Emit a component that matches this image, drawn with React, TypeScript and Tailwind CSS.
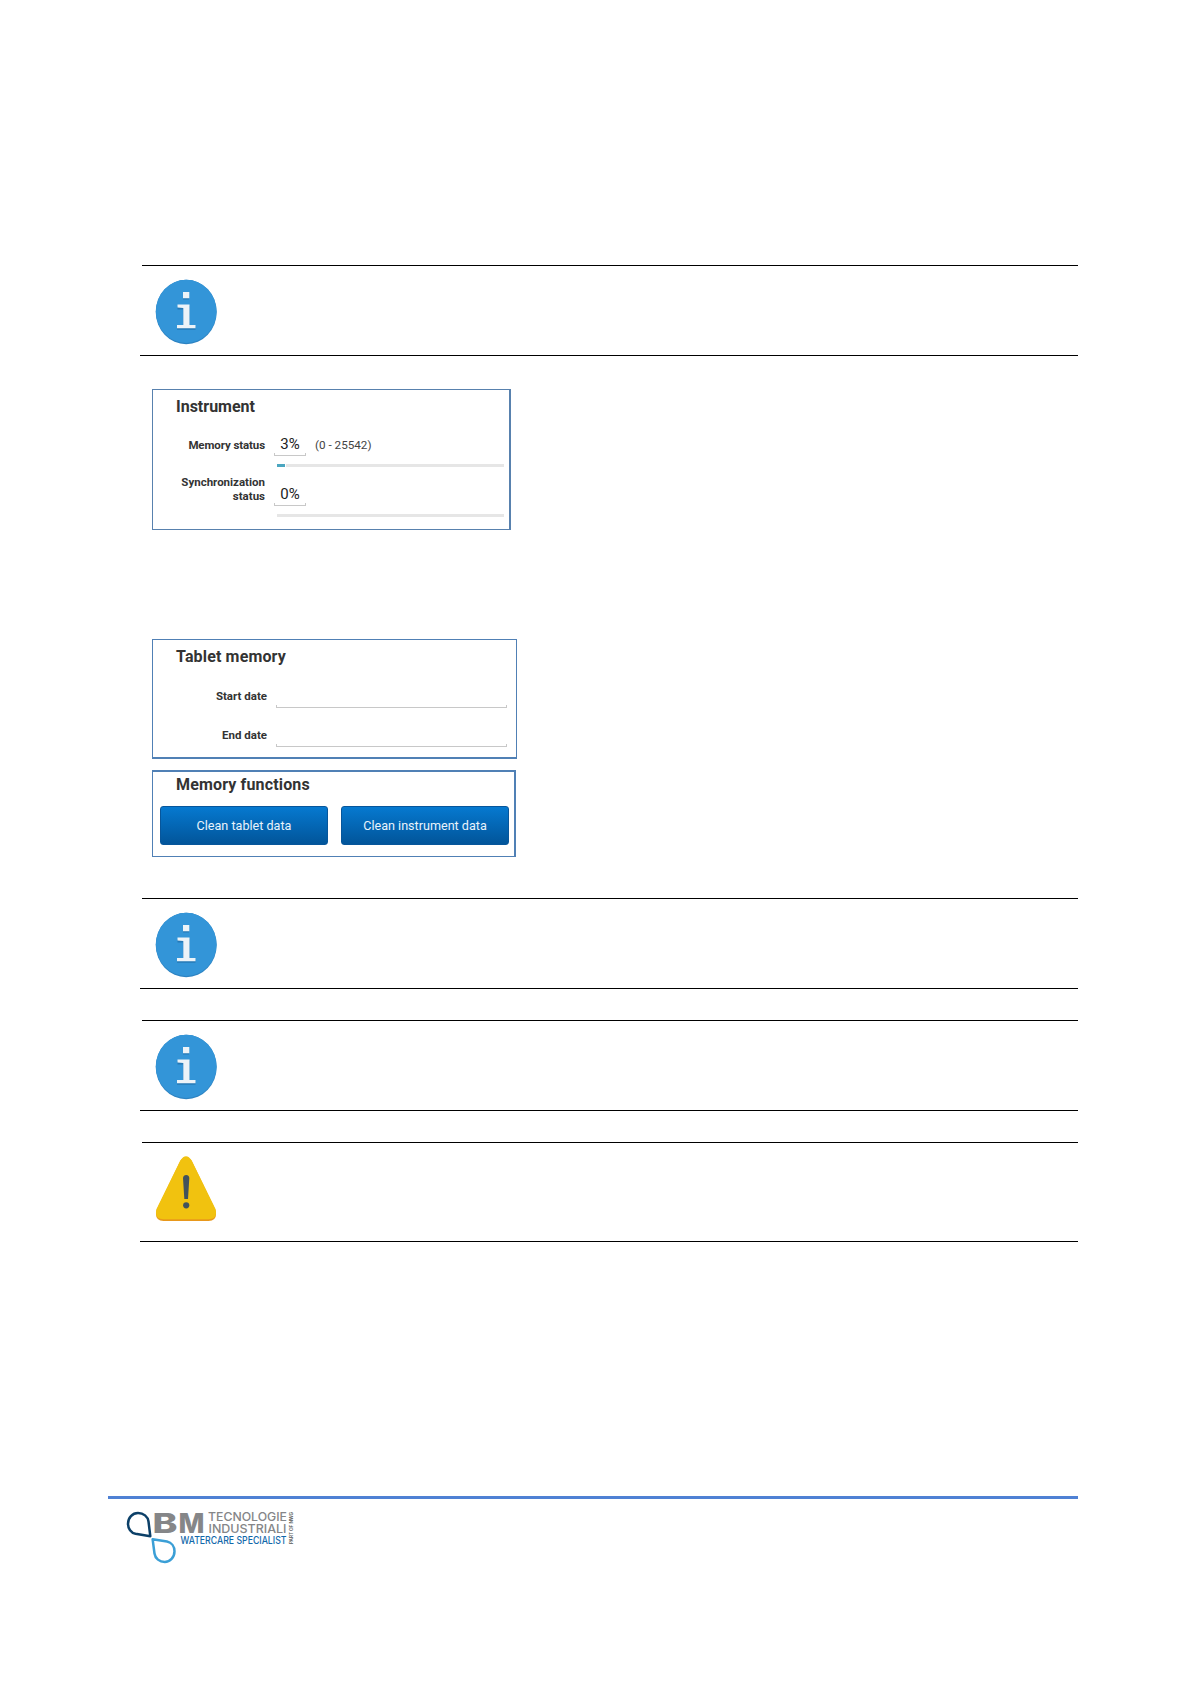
import type { ReactNode } from 'react';
import clsx from 'clsx';

const InfoIcon = () => (
    <svg width="62" height="66" viewBox="0 0 62 66">
        <ellipse cx="31.200" cy="33" rx="30.500" ry="32.200" fill="#2d83c2" />
        <ellipse cx="31.200" cy="32.400" rx="30.300" ry="31.600" fill="#3395d8" />
        <path d="M28 14.500h6v6h-6zM22.500 27h12v20.500h6v3.300h-18.500v-3.300h6v-17h-5.500z" fill="#2579b6" />
        <path d="M28 13h6.300v6.200h-6.300zM22.500 25.500h12V46h6v3.200h-18.500V46h6.300V29l-5.800-.500z" fill="#ecf3f8" />
    </svg>
);

const WarningIcon = () => (
    <svg width="62" height="66" viewBox="0 0 62 66">
        <path d="M25.300 5Q31-3 36.700 5L60.500 54Q63 65 53.500 65H8.500Q-1 65 1.500 54z" fill="#e8981c" />
        <path d="M25.300 4.500Q31-4 36.700 4.500L60.500 53Q63 63.300 53.500 63.300H8.500Q-1 63.300 1.500 53z" fill="#f1c20f" />
        <path d="M28 22.500Q28 19 31.200 19T34.300 22.500L33 43H29.300z" fill="#42525c" />
        <circle cx="31.200" cy="49.300" r="3.100" fill="#42525c" />
    </svg>
);

const Note = ({ children, className }: { children: ReactNode; className?: string }) => (
    <div className={clsx('w-[938px] ml-[140px] flex flex-col', className)}>
        <div className="h-px ml-0.5 bg-black" />
        <div className="flex-1 pl-[15px] pt-[13px]">{children}</div>
        <div className="h-px bg-black" />
    </div>
);

const Field = ({ value, className }: { value?: string; className?: string }) => (
    <div className={clsx('flex flex-col', className)}>
        <div className="h-[18px] text-center text-[15px] leading-[18px] text-[#222]">{value}</div>
        <div className="h-[3px] border-x border-b border-[#c8c8c8]" />
    </div>
);

const Progress = ({ percent }: { percent: number }) => (
    <div className="h-[3px] w-[227px] bg-[#e6e6e6]">
        {percent > 0 && <div className="h-full border-r border-white bg-[#4ba6c0]" style={{ width: `${percent}%` }} />}
    </div>
);

const Title = ({ children, className }: { children: ReactNode; className?: string }) => (
    <h2 className={clsx('text-[16px] leading-5 font-bold text-[#333]', className)}>{children}</h2>
);

const Label = ({ children, className }: { children: ReactNode; className?: string }) => (
    <div className={clsx('text-right text-[11.5px] leading-[14px] font-bold text-[#333]', className)}>{children}</div>
);

const ActionButton = ({ children }: { children: ReactNode }) => (
    <button className="h-[39px] w-[168px] rounded-[3px] border border-[#07569b] bg-linear-to-b from-[#0679d0] to-[#02559a] pt-[2px] text-[12.6px] text-[#e8f3fc]">
        {children}
    </button>
);

const Logo = () => (
    <svg width="175" height="56" viewBox="0 0 175 56" className="overflow-visible">
        <path d="M24.300 25.200L9.500 22.800C5 21.800 2 17.500 2 12.800C2 6.500 6.500 2 12 2C17.500 2 21.800 5.500 22.500 10.500z" fill="none" stroke="#0c4068" strokeWidth="2.500" strokeLinejoin="round" />
        <path d="M26.600 28.200L41 30.500C45.500 31.500 48.500 35.500 48.500 40.300C48.500 46.500 44 51 38.800 51C33.500 51 29.200 47.500 28.500 42.500z" fill="none" stroke="#3b9fd6" strokeWidth="2.500" strokeLinejoin="round" />
        <g fontFamily="Inter, sans-serif" fill="#858688">
            <text x="26.500" y="21.500" fontSize="27.500" fontWeight="800" textLength="25" lengthAdjust="spacingAndGlyphs">B</text>
            <text x="52.500" y="21.500" fontSize="27.500" fontWeight="800" textLength="26" lengthAdjust="spacingAndGlyphs">M</text>
            <text x="82" y="10.200" fontSize="11.800" fontWeight="500" textLength="79" lengthAdjust="spacingAndGlyphs">TECNOLOGIE</text>
            <text x="82.500" y="22.300" fontSize="11.800" fontWeight="500" textLength="78" lengthAdjust="spacingAndGlyphs">INDUSTRIALI</text>
            <text x="54.500" y="32.800" fontSize="9.800" fontWeight="500" fill="#1268aa" textLength="106" lengthAdjust="spacingAndGlyphs">WATERCARE SPECIALIST</text>
            <text transform="translate(167 33) rotate(-90)" fontSize="4.500" fontWeight="600" fill="#555" textLength="32" lengthAdjust="spacingAndGlyphs">PART OF NWG</text>
        </g>
    </svg>
);

const App = () => (
    <div className="flex h-[1684px] w-[1191px] flex-col bg-white pt-[265px] font-['Roboto',sans-serif]">
        <Note className="h-[91px]"><InfoIcon /></Note>

        <section className="mt-[33px] ml-[152px] h-[141px] w-[359px] border border-r-2 border-[#5881ae] pt-[7px]">
            <div className="pl-[23px]"><Title>Instrument</Title></div>
            <div className="mt-[17px] flex">
                <Label className="w-[112px] pt-[4px] tracking-[-0.1px]">Memory status</Label>
                <Field value="3%" className="ml-[9px] w-[32px] pt-px" />
                <div className="ml-[9px] pt-[4px] text-[11.7px] leading-[15px] text-[#444]">(0 - 25542)</div>
            </div>
            <div className="mt-[8px] ml-[124px]"><Progress percent={3.9} /></div>
            <div className="mt-[8px] flex">
                <Label className="w-[112px]">Synchronization<br />status</Label>
                <Field value="0%" className="ml-[9px] w-[32px] pt-[10px]" />
            </div>
            <div className="mt-[8px] ml-[124px]"><Progress percent={0} /></div>
        </section>

        <section className="mt-[109px] ml-[152px] h-[120px] w-[365px] border border-b-2 border-[#5080b5] pt-[7px]">
            <div className="pl-[23px]"><Title className="tracking-[0.15px]">Tablet memory</Title></div>
            <div className="mt-[20px] flex">
                <Label className="w-[114px] pt-[2px]">Start date</Label>
                <Field className="ml-[9px] w-[231px]" />
            </div>
            <div className="mt-[18px] flex">
                <Label className="w-[114px] pt-[2px]">End date</Label>
                <Field className="ml-[9px] w-[231px]" />
            </div>
        </section>

        <section className="mt-[11px] ml-[152px] h-[87px] w-[364px] border border-t-2 border-r-2 border-[#5080b5] pt-[3px]">
            <div className="pl-[23px]"><Title className="tracking-[0.15px]">Memory functions</Title></div>
            <div className="mt-[11px] ml-[7px] flex gap-[13px]">
                <ActionButton>Clean tablet data</ActionButton>
                <ActionButton>Clean instrument data</ActionButton>
            </div>
        </section>

        <Note className="mt-[41px] h-[91px]"><InfoIcon /></Note>
        <Note className="mt-[31px] h-[91px]"><InfoIcon /></Note>
        <Note className="mt-[31px] h-[100px]"><WarningIcon /></Note>

        <footer className="mt-[254px] ml-[108px] w-[970px] border-t-3 border-[#4f81d4] pt-[12px] pl-[18px]">
            <Logo />
        </footer>
    </div>
);

export default App;
